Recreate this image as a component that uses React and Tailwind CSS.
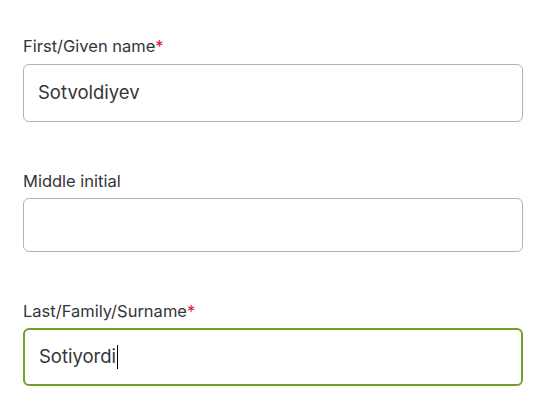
import React from 'react';

const Label = ({ children, required, className = '' }) => (
  <div className={`text-[16.5px] leading-6 text-[#343538] ${className}`}>
    {children}
    {required && <span className="text-[#e0143c]">*</span>}
  </div>
);

const Field = ({ value, focused, height = 'h-[58px]' }) => (
  <div
    className={`${height} flex items-center rounded-[6px] bg-white ${
      focused ? 'border-2 border-[#72a02a] pl-[14px]' : 'border border-[#b3b3b3] pl-[14px]'
    }`}
  >
    <span className="text-[18.5px] text-[#343538]">{value}</span>
    {focused && <span className="ml-[1px] h-[24px] w-[1px] bg-black" />}
  </div>
);

export default function App() {
  return (
    <div
      className="w-[536px] h-[411px] bg-white pl-[23px] pr-[13px] pt-[34px] overflow-hidden"
      style={{ fontFamily: 'Inter, "Noto Sans", sans-serif' }}
    >
      <Label required className="mb-[6px]">First/Given name</Label>
      <Field value="Sotvoldiyev" />

      <Label className="mt-[47px] mb-[5px]">Middle initial</Label>
      <Field value="" height="h-[54px]" />

      <Label required className="mt-[47px] mb-[5px]">Last/Family/Surname</Label>
      <Field value="Sotiyordi" focused />
    </div>
  );
}
